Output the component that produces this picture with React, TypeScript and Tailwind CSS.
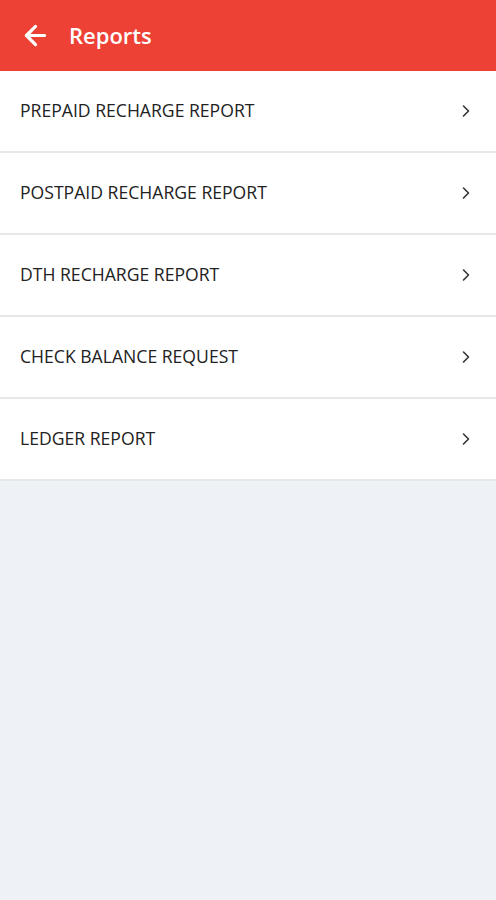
import { ArrowLeft } from "lucide-react";

const REPORTS = [
  "PREPAID RECHARGE REPORT",
  "POSTPAID RECHARGE REPORT",
  "DTH RECHARGE REPORT",
  "CHECK BALANCE REQUEST",
  "LEDGER REPORT",
];

function Chevron() {
  return (
    <svg width="10" height="14" viewBox="0 0 10 14" fill="none" className="text-[#333]">
      <path d="M2.5 2 L7.5 7 L2.5 12" stroke="currentColor" strokeWidth="1.6" strokeLinecap="round" strokeLinejoin="round" />
    </svg>
  );
}

export default function App() {
  return (
    <div className="min-h-[900px] bg-[#eef2f6] font-['Open_Sans',sans-serif]">
      {/* Toolbar */}
      <header className="h-[71px] bg-[#ee4136] flex items-center pl-[20px] gap-[18px] shadow-[0_1px_3px_rgba(0,0,0,0.2)]">
        <ArrowLeft className="h-[31px] w-[31px] text-white" strokeWidth={2.5} />
        <h1 className="text-white text-[22px] font-semibold">Reports</h1>
      </header>

      {/* Report list */}
      <ul className="bg-white">
        {REPORTS.map((label) => (
          <li
            key={label}
            className="h-[82px] flex items-center justify-between pl-[20px] pr-[25px] border-b-2 border-[#e6e8ea]"
          >
            <span className="text-[17.6px] text-[#222] -mt-[2px]">{label}</span>
            <Chevron />
          </li>
        ))}
      </ul>
    </div>
  );
}
